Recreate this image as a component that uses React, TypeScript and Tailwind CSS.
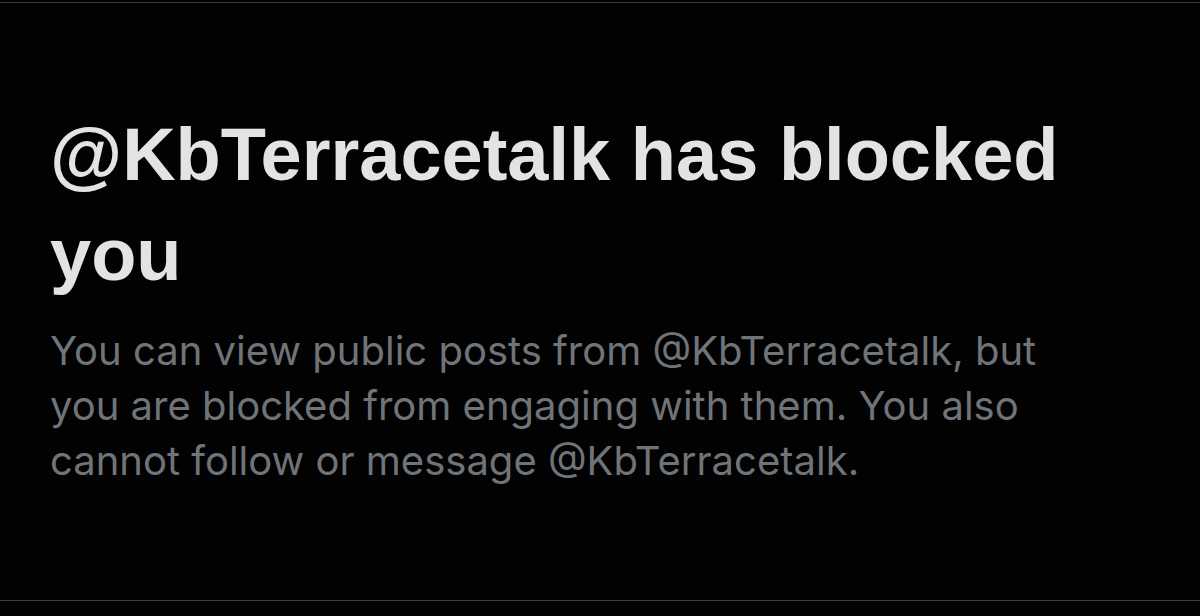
export default function App() {
  const handle = '@KbTerracetalk';

  return (
    <div className="w-[1200px] h-[616px] bg-[#020203] flex flex-col overflow-hidden">
      {/* top divider */}
      <div className="mt-[2px] h-[1px] bg-[#3a3a3e]" />

      {/* blocked notice */}
      <div className="flex-1 pl-[50px] pr-[60px] pt-[102px]">
        <h1
          className="text-[74px] leading-[100px] font-bold text-[#e3e3e3]"
          style={{ fontFamily: '"Liberation Sans", Arial, sans-serif' }}
        >
          {handle} has blocked you
        </h1>
        <p
          className="mt-[18px] w-[1005px] text-[40px] leading-[55px] text-[#6f7479]"
          style={{ fontFamily: 'Inter, "Noto Sans", sans-serif' }}
        >
          You can view public posts from {handle}, but you are blocked from engaging with them. You
          also cannot follow or message {handle}.
        </p>
      </div>

      {/* bottom divider */}
      <div className="h-[1px] bg-[#3e3e41] mb-[15px]" />
    </div>
  );
}
